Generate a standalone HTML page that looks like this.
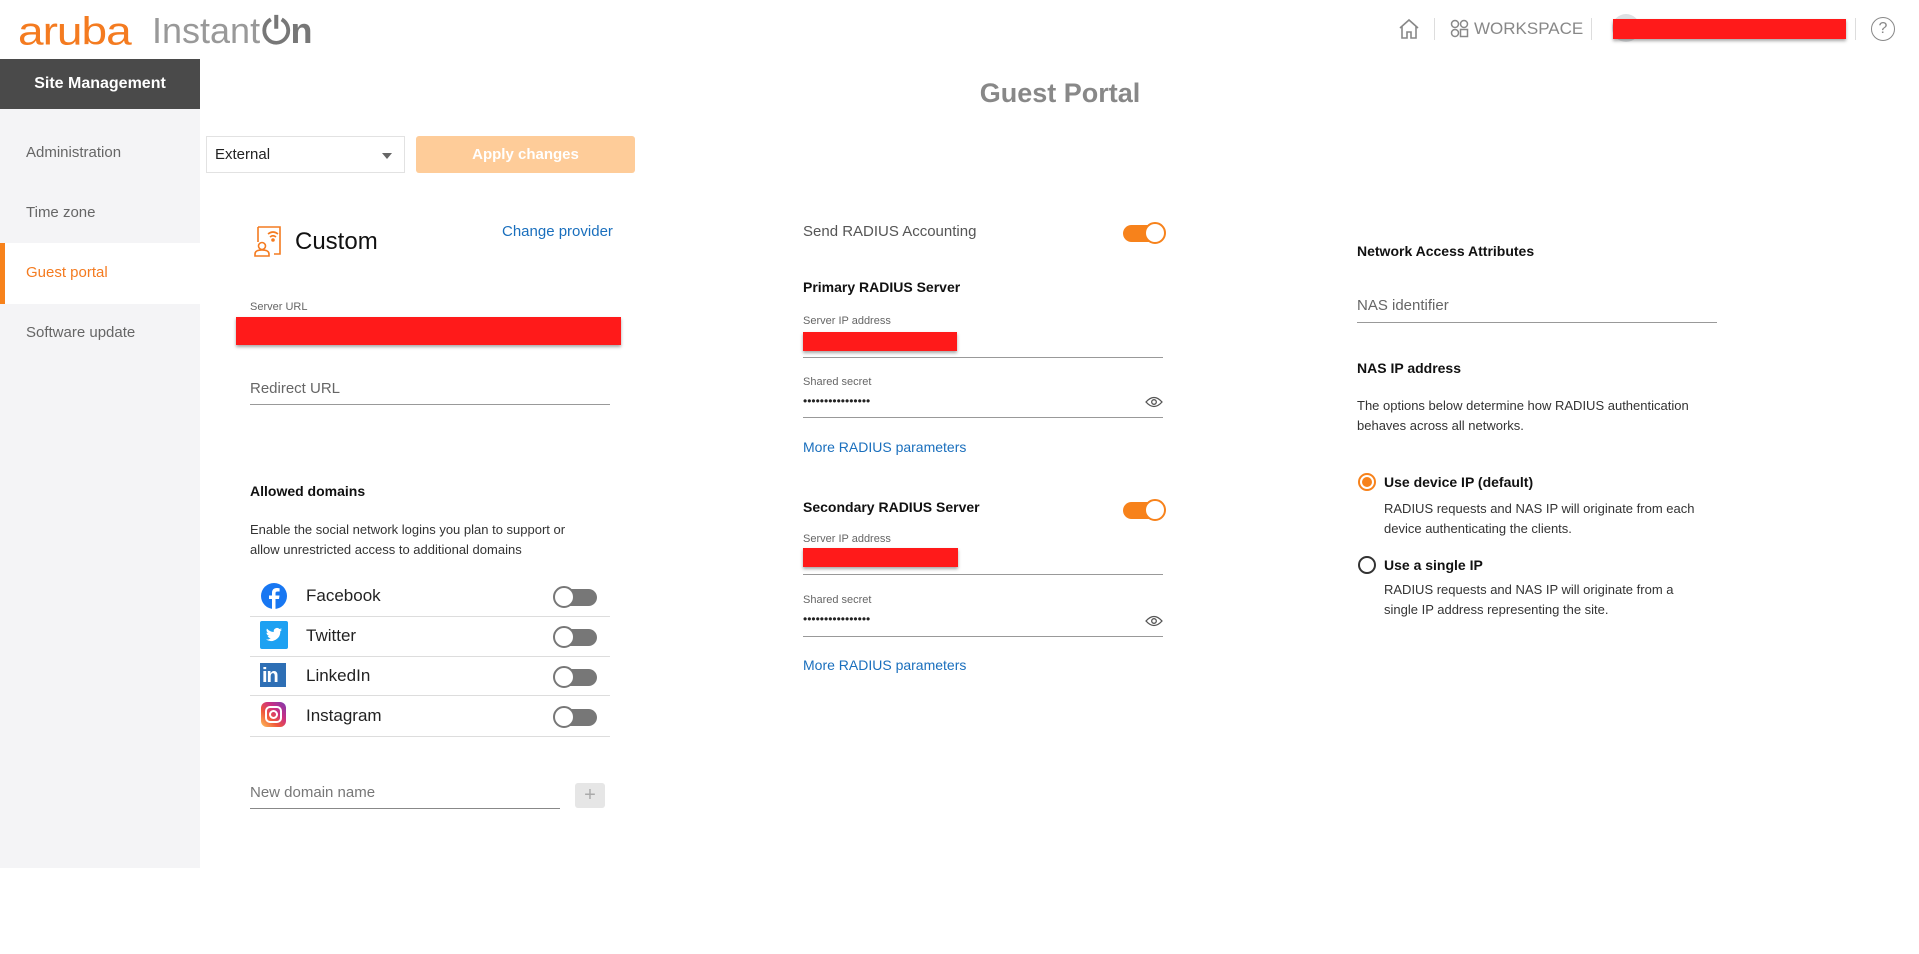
<!DOCTYPE html>
<html><head><meta charset="utf-8"><style>
*{margin:0;padding:0;box-sizing:border-box}
body{width:1919px;height:954px;background:#fff;font-family:"Liberation Sans",sans-serif;position:relative;overflow:hidden;color:#222}
.a{position:absolute;white-space:nowrap}
.lbl{font-size:11px;color:#666}
.ul{position:absolute;height:1px;background:#999}
.red{position:absolute;background:#ff1a1a;box-shadow:0 2px 3px rgba(0,0,0,.35)}
.b{font-weight:bold;font-size:14px;color:#111}
.link{color:#1a6fbd;font-size:14px}
.tg{position:absolute;width:44px;height:18px}
.tg .tr{position:absolute;left:2px;top:2px;width:42px;height:17px;border-radius:9px;background:#777}
.tg .kn{position:absolute;left:0;top:-1px;width:22px;height:22px;border-radius:50%;background:#fff;border:2px solid #777}
.tg.on .tr{background:#f7821b}
.tg.on .kn{left:23px;border-color:#f7821b}
.row{position:absolute;left:250px;width:360px;height:1px;background:#ddd}
.sn{font-size:17px;color:#222}
.desc{font-size:13px;color:#333;line-height:20px}
</style></head><body>
<!-- header -->
<div class="a" style="left:18px;top:4px;font-size:46px;color:#f47b20;letter-spacing:-1px;transform:scaleY(.85)">aruba</div>
<div class="a" style="left:152px;top:10px;font-size:36px;color:#999">Instant</div>
<div class="a" style="left:262px;top:10px;font-size:36px;color:#777;font-weight:bold">&#x23FB;n</div>

<svg class="a" style="left:1397px;top:17px" width="24" height="24" viewBox="0 0 24 24" fill="none" stroke="#888" stroke-width="1.6"><path d="M3 11 L12 3 L21 11 M5 9 V21 H10 V15 H14 V21 H19 V9"/></svg>
<div class="a" style="left:1434px;top:18px;width:1px;height:22px;background:#ddd"></div>
<svg class="a" style="left:1450px;top:19px" width="20" height="20" viewBox="0 0 20 20" fill="none" stroke="#888" stroke-width="1.5"><circle cx="5" cy="5" r="3.5"/><circle cx="14" cy="5" r="3.5"/><circle cx="5" cy="14" r="3.5"/><rect x="10.5" y="10.5" width="7" height="7"/></svg>
<div class="a" style="left:1474px;top:19px;font-size:17px;color:#888">WORKSPACE</div>
<div class="a" style="left:1591px;top:18px;width:1px;height:22px;background:#ddd"></div>
<div class="a" style="left:1612px;top:14px;width:28px;height:28px;border-radius:50%;background:#dde0e3"></div>
<div class="red" style="left:1613px;top:19px;width:233px;height:20px"></div>
<div class="a" style="left:1855px;top:18px;width:1px;height:22px;background:#ddd"></div>
<div class="a" style="left:1871px;top:17px;width:24px;height:24px;border-radius:50%;border:1.6px solid #888;color:#888;font-size:16px;text-align:center;line-height:21px">?</div>

<!-- sidebar -->
<div class="a" style="left:0;top:59px;width:200px;height:809px;background:#f4f4f6"></div>
<div class="a" style="left:0;top:59px;width:200px;height:50px;background:#4a4a4a;color:#fff;font-weight:bold;font-size:16px;text-align:center;line-height:50px">Site Management</div>
<div class="a" style="left:26px;top:144px;font-size:15px;color:#666">Administration</div>
<div class="a" style="left:26px;top:204px;font-size:15px;color:#666">Time zone</div>
<div class="a" style="left:0;top:243px;width:200px;height:61px;background:#fff;border-left:5px solid #f7821b"></div>
<div class="a" style="left:26px;top:264px;font-size:15px;color:#f47b20">Guest portal</div>
<div class="a" style="left:26px;top:324px;font-size:15px;color:#666">Software update</div>

<!-- title -->
<div class="a" style="left:960px;top:78px;width:200px;text-align:center;font-size:27px;font-weight:bold;color:#888">Guest Portal</div>

<!-- controls -->
<div class="a" style="left:206px;top:136px;width:199px;height:37px;border:1px solid #e2e2e2"></div>
<div class="a" style="left:215px;top:146px;font-size:15px;color:#222">External</div>
<div class="a" style="left:382px;top:153px;width:0;height:0;border-left:5px solid transparent;border-right:5px solid transparent;border-top:6px solid #666"></div>
<div class="a" style="left:416px;top:136px;width:219px;height:37px;background:#fecc99;border-radius:3px;color:#fff;font-weight:bold;font-size:15px;text-align:center;line-height:37px">Apply changes</div>

<!-- left column -->
<svg class="a" style="left:253px;top:224px" width="30" height="34" viewBox="0 0 30 34" fill="none" stroke="#f47b20" stroke-width="1.6"><path d="M5 3 H27 V30 H21"/><path d="M5 3 V18"/><circle cx="9" cy="22" r="3.5"/><path d="M2 32 V30 Q2 26 9 26 Q16 26 16 30 V32 Z"/><path d="M15 10 Q20 6 25 10 M17 13 Q20 10.5 23 13"/><circle cx="20" cy="16" r="1" fill="#f47b20"/></svg>
<div class="a" style="left:295px;top:228px;font-size:24px;color:#111">Custom</div>
<div class="a link" style="left:502px;top:223px;font-size:15px">Change provider</div>
<div class="a lbl" style="left:250px;top:301px">Server URL</div>
<div class="red" style="left:236px;top:317px;width:385px;height:28px"></div>
<div class="a" style="left:250px;top:380px;font-size:15px;color:#666">Redirect URL</div>
<div class="ul" style="left:250px;top:404px;width:360px"></div>

<div class="a b" style="left:250px;top:483px">Allowed domains</div>
<div class="a desc" style="left:250px;top:520px">Enable the social network logins you plan to support or<br>allow unrestricted access to additional domains</div>

<svg class="a" style="left:261px;top:583px" width="26" height="26" viewBox="0 0 26 26"><circle cx="13" cy="13" r="13" fill="#1877f2"/><path d="M14.5 26 V16 H18 L18.5 12.5 H14.5 V10.3 C14.5 9.2 15 8.5 16.5 8.5 H18.6 V5.3 C18 5.2 16.8 5 15.6 5 C12.8 5 11 6.8 11 9.8 V12.5 H8 V16 H11 V26Z" fill="#fff"/></svg>
<div class="a sn" style="left:306px;top:586px">Facebook</div>
<div class="row" style="top:616px"></div>
<svg class="a" style="left:260px;top:621px" width="28" height="28" viewBox="0 0 28 28"><rect width="28" height="28" rx="2" fill="#1da1f2"/><path d="M22 8.5c-.6.3-1.2.4-1.9.5.7-.4 1.2-1 1.4-1.8-.6.4-1.3.6-2.1.8a3.3 3.3 0 0 0-5.6 3A9.3 9.3 0 0 1 7 7.6a3.3 3.3 0 0 0 1 4.4c-.5 0-1-.2-1.5-.4 0 1.6 1.1 2.9 2.6 3.2-.5.1-1 .2-1.5.1.4 1.3 1.6 2.3 3.1 2.3A6.6 6.6 0 0 1 6 18.5a9.3 9.3 0 0 0 14.3-8.3c.7-.4 1.2-1 1.700-1.7z" fill="#fff"/></svg>
<div class="a sn" style="left:306px;top:626px">Twitter</div>
<div class="row" style="top:656px"></div>
<div class="a" style="left:260px;top:663px;width:26px;height:24px;background:#2e6fb5;color:#fff;font-weight:bold;font-size:20px;line-height:26px;padding-left:2px;letter-spacing:-1px">in</div>
<div class="a sn" style="left:306px;top:666px">LinkedIn</div>
<div class="row" style="top:695px"></div>
<div class="a" style="left:261px;top:702px;width:25px;height:25px;border-radius:6px;background:linear-gradient(45deg,#fdc15a,#f0583a 35%,#c92f84 65%,#7a3bb0)"></div>
<div class="a" style="left:265px;top:706px;width:17px;height:17px;border-radius:5px;border:2px solid #fff"></div>
<div class="a" style="left:269px;top:710px;width:9px;height:9px;border-radius:50%;border:2px solid #fff"></div>
<div class="a sn" style="left:306px;top:706px">Instagram</div>
<div class="row" style="top:736px"></div>
<div class="tg" style="left:553px;top:587px"><div class="tr"></div><div class="kn"></div></div>
<div class="tg" style="left:553px;top:627px"><div class="tr"></div><div class="kn"></div></div>
<div class="tg" style="left:553px;top:667px"><div class="tr"></div><div class="kn"></div></div>
<div class="tg" style="left:553px;top:707px"><div class="tr"></div><div class="kn"></div></div>

<div class="a" style="left:250px;top:784px;font-size:15px;color:#777">New domain name</div>
<div class="ul" style="left:250px;top:808px;width:310px;background:#888"></div>
<div class="a" style="left:575px;top:783px;width:30px;height:25px;background:#e6e6e6;border-radius:3px;color:#aaa;text-align:center;font-size:20px;line-height:24px">+</div>

<!-- middle column -->
<div class="a" style="left:803px;top:223px;font-size:15px;color:#555">Send RADIUS Accounting</div>
<div class="tg on" style="left:1121px;top:223px"><div class="tr"></div><div class="kn"></div></div>
<div class="a b" style="left:803px;top:279px">Primary RADIUS Server</div>
<div class="a lbl" style="left:803px;top:315px">Server IP address</div>
<div class="red" style="left:803px;top:332px;width:154px;height:19px"></div>
<div class="ul" style="left:803px;top:357px;width:360px"></div>
<div class="a lbl" style="left:803px;top:376px">Shared secret</div>
<div class="a" style="left:803px;top:394px;font-size:12px;color:#222">••••••••••••••••</div>
<svg class="a" style="left:1145px;top:396px" width="18" height="12" viewBox="0 0 18 12" fill="none" stroke="#555" stroke-width="1.3"><path d="M1 6 Q9 -3 17 6 Q9 15 1 6Z"/><circle cx="9" cy="6" r="2.3"/></svg>
<div class="ul" style="left:803px;top:417px;width:360px"></div>
<div class="a link" style="left:803px;top:439px">More RADIUS parameters</div>
<div class="a b" style="left:803px;top:499px">Secondary RADIUS Server</div>
<div class="tg on" style="left:1121px;top:500px"><div class="tr"></div><div class="kn"></div></div>
<div class="a lbl" style="left:803px;top:533px">Server IP address</div>
<div class="red" style="left:803px;top:548px;width:155px;height:19px"></div>
<div class="ul" style="left:803px;top:574px;width:360px"></div>
<div class="a lbl" style="left:803px;top:594px">Shared secret</div>
<div class="a" style="left:803px;top:612px;font-size:12px;color:#222">••••••••••••••••</div>
<svg class="a" style="left:1145px;top:615px" width="18" height="12" viewBox="0 0 18 12" fill="none" stroke="#555" stroke-width="1.3"><path d="M1 6 Q9 -3 17 6 Q9 15 1 6Z"/><circle cx="9" cy="6" r="2.3"/></svg>
<div class="ul" style="left:803px;top:636px;width:360px"></div>
<div class="a link" style="left:803px;top:657px">More RADIUS parameters</div>

<!-- right column -->
<div class="a b" style="left:1357px;top:243px">Network Access Attributes</div>
<div class="a" style="left:1357px;top:297px;font-size:15px;color:#666">NAS identifier</div>
<div class="ul" style="left:1357px;top:322px;width:360px"></div>
<div class="a b" style="left:1357px;top:360px">NAS IP address</div>
<div class="a desc" style="left:1357px;top:396px">The options below determine how RADIUS authentication<br>behaves across all networks.</div>
<div class="a" style="left:1358px;top:473px;width:18px;height:18px;border-radius:50%;border:2px solid #f7821b"></div>
<div class="a" style="left:1362px;top:477px;width:10px;height:10px;border-radius:50%;background:#f7821b"></div>
<div class="a b" style="left:1384px;top:474px">Use device IP (default)</div>
<div class="a desc" style="left:1384px;top:499px">RADIUS requests and NAS IP will originate from each<br>device authenticating the clients.</div>
<div class="a" style="left:1358px;top:556px;width:18px;height:18px;border-radius:50%;border:2px solid #333"></div>
<div class="a b" style="left:1384px;top:557px">Use a single IP</div>
<div class="a desc" style="left:1384px;top:580px">RADIUS requests and NAS IP will originate from a<br>single IP address representing the site.</div>
</body></html>
